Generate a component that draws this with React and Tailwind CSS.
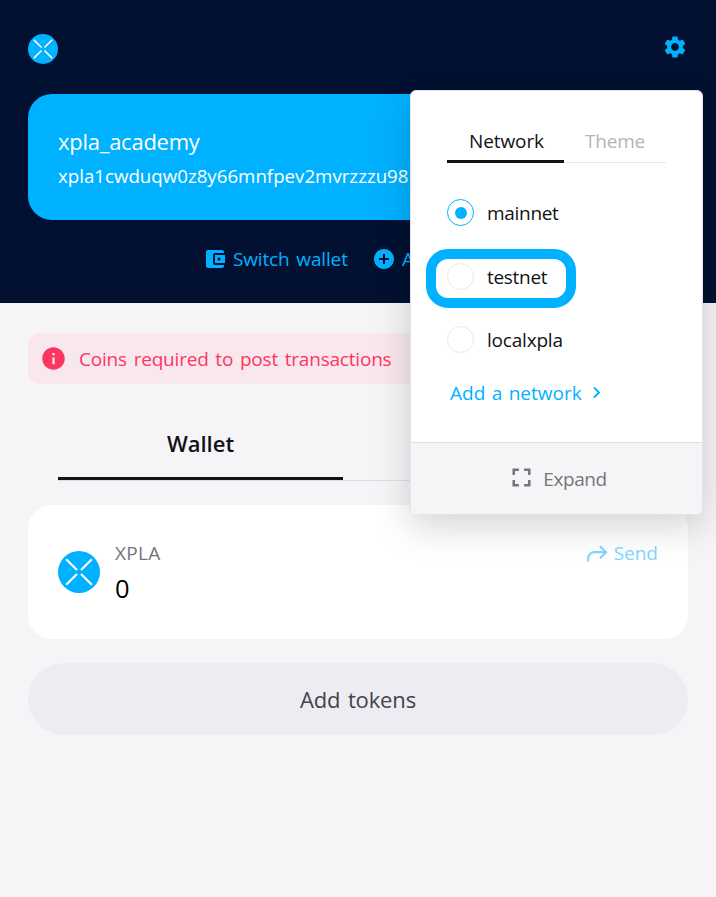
import { MdSettings, MdAccountBalanceWallet, MdAddCircle, MdInfo, MdFullscreen, MdChevronRight } from "react-icons/md";

function XplaLogo({ className }) {
  return (
    <svg viewBox="0 0 42 42" className={className}>
      <circle cx="21" cy="21" r="21" fill="#00b1ff" />
      <path d="M8.2 8.2 19 19M33.8 8.2 23 19M8.2 33.8 19 23M33.8 33.8 23 23" stroke="#fff" strokeWidth="2.1" />
    </svg>
  );
}

function SendArrow({ className }) {
  return (
    <svg viewBox="0 0 24 24" fill="none" stroke="currentColor" strokeWidth="2.2" className={className}>
      <path d="M3.2 20.5V17.2a6 6 0 0 1 6-6H20.6M15 5.2l6 6-6 6" />
    </svg>
  );
}

function Radio({ label, checked, className }) {
  return (
    <div className="flex h-[27px] items-center gap-[13px]">
      <span className={checked ? "flex size-[27px] items-center justify-center rounded-full border border-[#00b1ff]" : "flex size-[27px] items-center justify-center rounded-full border border-[#e8e8ea]"}>
        {checked && <span className="size-3 rounded-full bg-[#00b1ff]" />}
      </span>
      <span className={className}>{label}</span>
    </div>
  );
}

function Header() {
  return (
    <header className="h-[303px] bg-[#021131] px-7 pt-[33px]">
      <div className="flex h-[31px] items-start justify-between">
        <XplaLogo className="mt-px size-[30px]" />
        <MdSettings className="mt-[0.5px] mr-[0.5px] size-[26px] text-[#00b1ff]" />
      </div>
      <section className="mt-[30px] h-[126px] overflow-hidden rounded-[24px] bg-[#00b1ff] px-[30px] pt-8 text-white">
        <h1 className="text-[22px] leading-[30px] tracking-[-0.25px]">xpla_academy</h1>
        <p className="mt-[7px] text-[18.7px] leading-[26px] font-medium whitespace-nowrap">xpla1cwduqw0z8y66mnfpev2mvrzzzu98</p>
      </section>
      <div className="mt-[26px] flex h-[26px] items-center pl-[175px] text-[19px] leading-[26px] text-[#00b1ff]">
        <MdAccountBalanceWallet className="size-6" />
        <span className="ml-[6px] w-[115px] tracking-[-0.15px] whitespace-nowrap [word-spacing:2px]">Switch wallet</span>
        <MdAddCircle className="ml-6 size-6" />
        <span className="ml-[6px] whitespace-nowrap">Add</span>
      </div>
    </header>
  );
}

function NetworkMenu() {
  return (
    <aside className="absolute top-[90px] left-[410px] flex h-[425px] w-[293px] flex-col overflow-hidden rounded-[6px] border border-[#e4e4e8] bg-white shadow-[0_12px_36px_rgba(0,0,0,0.17)]">
      <div className="h-[351px] px-9 pt-[34px]">
        <div className="flex h-[38px] w-[219px] items-start border-b border-[#e8e8ea] text-[19px] leading-[32px]">
          <div className="h-[38px] w-[117px] border-b-[3px] border-[#121214] pl-[2px] text-center tracking-[-0.1px] text-[#121214]">Network</div>
          <div className="w-[102px] text-center tracking-[-0.2px] text-[#b5b5b7]">Theme</div>
        </div>
        <div className="mt-9 flex flex-col gap-[36.5px] text-[19px] leading-[26px] text-[#121214]">
          <Radio label="mainnet" checked className="tracking-[-0.3px]" />
          <Radio label="testnet" className="pt-[2px] tracking-[-0.3px]" />
          <Radio label="localxpla" className="tracking-[-0.2px]" />
        </div>
        <div className="mt-[26px] ml-[3px] flex h-[28px] items-center text-[19px] text-[#00b1ff]">
          <span className="whitespace-nowrap [word-spacing:1.5px]">Add a network</span>
          <MdChevronRight className="ml-[3px] size-[23px] -translate-y-px" />
        </div>
      </div>
      <div className="flex flex-1 items-center justify-center gap-[6px] border-t border-[#dfdfe5] bg-[#f5f5f8] text-[19px] text-[#75757a]">
        <MdFullscreen className="size-[31px] -translate-y-px" />
        <span className="pt-px tracking-[-0.4px]">Expand</span>
      </div>
    </aside>
  );
}

export default function App() {
  return (
    <div className="relative h-[897px] w-[716px] overflow-hidden bg-[#f5f5f8] font-['Open_Sans','Noto_Sans',sans-serif]">
      <Header />
      <main className="px-7 pt-[30px]">
        <div className="flex h-[51px] items-center gap-3 rounded-[12px] bg-[#f8e8ee] pl-3 text-[19px] text-[#ff3561]">
          <MdInfo className="size-[27px]" />
          <span className="pt-px tracking-[-0.2px] whitespace-nowrap [word-spacing:2px]">Coins required to post transactions</span>
        </div>
        <div className="mx-[30px] mt-9 flex h-[61px] border-b border-[#dfdfe3]">
          <div className="h-[60px] w-[285px] border-b-[3px] border-[#121214] text-center text-[22px] leading-[46px] font-semibold text-[#121214]">Wallet</div>
        </div>
        <section className="mt-6 flex h-[134px] items-start rounded-[24px] bg-white px-[30px] pt-[35px]">
          <XplaLogo className="mt-[11px] size-[42px]" />
          <div className="ml-[15px] flex-1">
            <div className="text-[19px] leading-[26px] tracking-[0.3px] text-[#75757a]">XPLA</div>
            <div className="mt-[5px] text-[25.5px] leading-[34px] text-black">0</div>
          </div>
          <div className="flex h-[26px] items-center gap-[5px] text-[19px] text-[#80d8ff]">
            <SendArrow className="size-6" />
            <span>Send</span>
          </div>
        </section>
        <button className="mt-6 h-[72px] w-full rounded-full bg-[#edecf2] text-[22px] tracking-[-0.15px] text-[#42444c] [word-spacing:2px]">Add tokens</button>
      </main>
      <NetworkMenu />
      <div className="absolute top-[249px] left-[426px] h-[59px] w-[150px] rounded-[22px] border-[10px] border-[#00b1ff]" />
    </div>
  );
}
